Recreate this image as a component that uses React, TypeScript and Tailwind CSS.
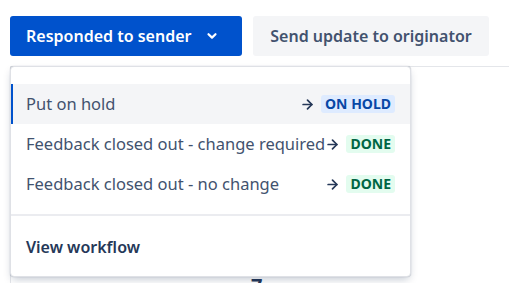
import { ArrowRight } from 'lucide-react';

const items = [
  { label: 'Put on hold', status: 'ON HOLD', tone: 'blue', active: true },
  { label: 'Feedback closed out - change required', status: 'DONE', tone: 'green', active: false },
  { label: 'Feedback closed out - no change', status: 'DONE', tone: 'green', active: false },
];

export default function App() {
  return (
    <div className="relative h-[283px] w-[509px] overflow-hidden bg-white" style={{ fontFamily: '"Noto Sans", "Open Sans", sans-serif' }}>
      {/* Panel behind the menu */}
      <div className="absolute left-[10px] top-[66px] h-[300px] w-[600px] border-l border-t border-[#e4e6ea]">
        <span className="absolute left-[240px] top-[204px] text-[20px] font-bold text-[#253858]">7</span>
      </div>

      {/* Buttons */}
      <div className="relative flex gap-[11px] pl-[10px] pt-[16px]">
        <button className="flex h-[40px] w-[232px] items-center rounded-[3px] bg-[#0052cc] pl-[16px] text-[16px] font-semibold text-white">
          <span>Responded to sender</span>
          <svg className="ml-[14px]" width="12" height="12" viewBox="0 0 12 12" fill="none">
            <path d="M2.5 4.2 6 7.6l3.5-3.4" stroke="white" strokeWidth="2.2" strokeLinecap="round" strokeLinejoin="round" />
          </svg>
        </button>
        <button className="flex h-[40px] w-[236px] items-center justify-center rounded-[3px] bg-[#f4f5f7] text-[16px] font-semibold text-[#42526e]">
          Send update to originator
        </button>
      </div>

      {/* Dropdown menu */}
      <div className="absolute left-[10px] top-[66px] w-[401px] rounded-[4px] border border-[#dfe1e6] bg-white pt-[17px] shadow-[0_4px_8px_-2px_rgba(9,30,66,0.25),0_0_1px_rgba(9,30,66,0.31)]">
        {items.map((it) => (
          <div
            key={it.label}
            className={
              it.active
                ? 'flex h-[40px] items-center border-l-2 border-[#0052cc] bg-[#f4f5f7] pl-[13px] pr-[15px]'
                : 'flex h-[40px] items-center border-l-2 border-transparent pl-[13px] pr-[15px]'
            }
          >
            <span className="flex-1 whitespace-nowrap text-[16.5px] text-[#42526e]">{it.label}</span>
            <ArrowRight className="mr-[6px] h-[15px] w-[15px] text-[#253858]" strokeWidth={2.75} />
            <span
              className={
                it.tone === 'blue'
                  ? 'rounded-[3px] bg-[#deebff] px-[4px] text-[14px] font-bold leading-[18px] text-[#0747a6]'
                  : 'rounded-[3px] bg-[#e3fcef] px-[4px] text-[14px] font-bold leading-[18px] text-[#006644]'
              }
            >
              {it.status}
            </span>
          </div>
        ))}
        <div className="mt-[10px] border-t-2 border-[#ebecf0]" />
        <div className="flex h-[60px] items-center pl-[15px] pt-[2px] text-[16px] font-semibold text-[#253858]">View workflow</div>
      </div>
    </div>
  );
}
